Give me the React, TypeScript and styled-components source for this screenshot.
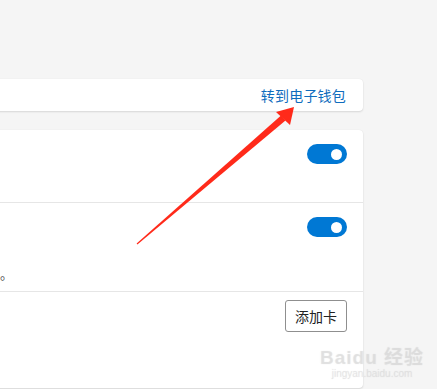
import styled, { createGlobalStyle } from 'styled-components'

const blue = '#0f6cbd'
const toggleBlue = '#0078d4'
const divider = '#e6e6e6'

const GlobalStyle = createGlobalStyle`
  html, body {
    margin: 0;
    padding: 0;
    background: #f5f5f5;
    font-family: "Segoe UI", "Noto Sans CJK SC", "Noto Sans", sans-serif;
    overflow: hidden;
  }
`

const Page = styled.div`
  position: relative;
  width: 437px;
  height: 389px;
  overflow: hidden;
`

const Column = styled.div`
  display: flex;
  flex-direction: column;
  gap: 19px;
  width: 383px;
  margin-left: -20px;
  padding-top: 79px;
`

const Card = styled.div<{ $tall?: boolean }>`
  background: #fff;
  border-radius: 4px;
  box-shadow: 0 1px 2px rgba(0, 0, 0, 0.12), 0 0 1px rgba(0, 0, 0, 0.08);
  ${({ $tall }) => ($tall ? 'height: 258px;' : '')}
`

const LinkBar = styled.div`
  height: 32px;
  display: flex;
  align-items: center;
  justify-content: flex-end;
  padding-right: 17px;
`

const Link = styled.a`
  color: ${blue};
  font-size: 14px;
  text-decoration: none;
  letter-spacing: 0.2px;
`

const Row = styled.div<{ $h: number; $top: number }>`
  height: ${({ $h }) => $h}px;
  box-sizing: border-box;
  padding: ${({ $top }) => $top}px 16px 0 20px;
  display: flex;
  justify-content: space-between;
  align-items: flex-start;
  & + & {
    border-top: 1px solid ${divider};
  }
`

const Texts = styled.div`
  display: flex;
  flex-direction: column;
  height: 100%;
  justify-content: flex-end;
`

const Desc = styled.span`
  font-size: 13px;
  color: #555;
  margin-bottom: 8px;
`

const Toggle = styled.div`
  width: 40px;
  height: 20px;
  border-radius: 10px;
  background: ${toggleBlue};
  display: flex;
  align-items: center;
  justify-content: flex-end;
  padding-right: 5px;
  box-sizing: border-box;
`

const Knob = styled.div`
  width: 11px;
  height: 11px;
  border-radius: 50%;
  background: #fff;
`

const Button = styled.button`
  width: 62px;
  height: 32px;
  background: #fff;
  border: 1px solid #8f8f8f;
  border-radius: 3px;
  font-family: inherit;
  font-size: 14px;
  color: #222;
  padding: 0;
`

const Arrow = styled.svg`
  position: absolute;
  left: 0;
  top: 0;
  pointer-events: none;
`

const Watermark = styled.div`
  position: absolute;
  left: 320px;
  top: 342px;
  display: flex;
  flex-direction: column;
  align-items: center;
  color: rgba(215, 215, 215, 0.35);
  text-shadow: 0 0 1px rgba(190, 190, 190, 0.4);
  font-family: "Liberation Sans", "Noto Sans CJK SC", sans-serif;
  pointer-events: none;
`

const Mark = styled.span`
  font-size: 19px;
  font-weight: bold;
  letter-spacing: 1px;
`

const Domain = styled.span`
  font-size: 10px;
  margin-top: -1px;
`

export default function App() {
  return (
    <Page>
      <GlobalStyle />
      <Column>
        <Card>
          <LinkBar>
            <Link href="#">转到电子钱包</Link>
          </LinkBar>
        </Card>
        <Card $tall>
          <Row $h={72} $top={14}>
            <span />
            <Toggle>
              <Knob />
            </Toggle>
          </Row>
          <Row $h={89} $top={14}>
            <Texts>
              <Desc>。</Desc>
            </Texts>
            <Toggle>
              <Knob />
            </Toggle>
          </Row>
          <Row $h={96} $top={8}>
            <span />
            <Button>添加卡</Button>
          </Row>
        </Card>
      </Column>
      <Watermark>
        <Mark>Baidu 经验</Mark>
        <Domain>jingyan.baidu.com</Domain>
      </Watermark>
      <Arrow width="437" height="389" viewBox="0 0 437 389">
        <polygon
          points="136.6,243.6 137.4,244.4 285.5,120.5 281,115.5"
          fill="#ff2a1a"
        />
        <polygon points="294,107 276,112 290,125" fill="#ff2a1a" />
      </Arrow>
    </Page>
  )
}
